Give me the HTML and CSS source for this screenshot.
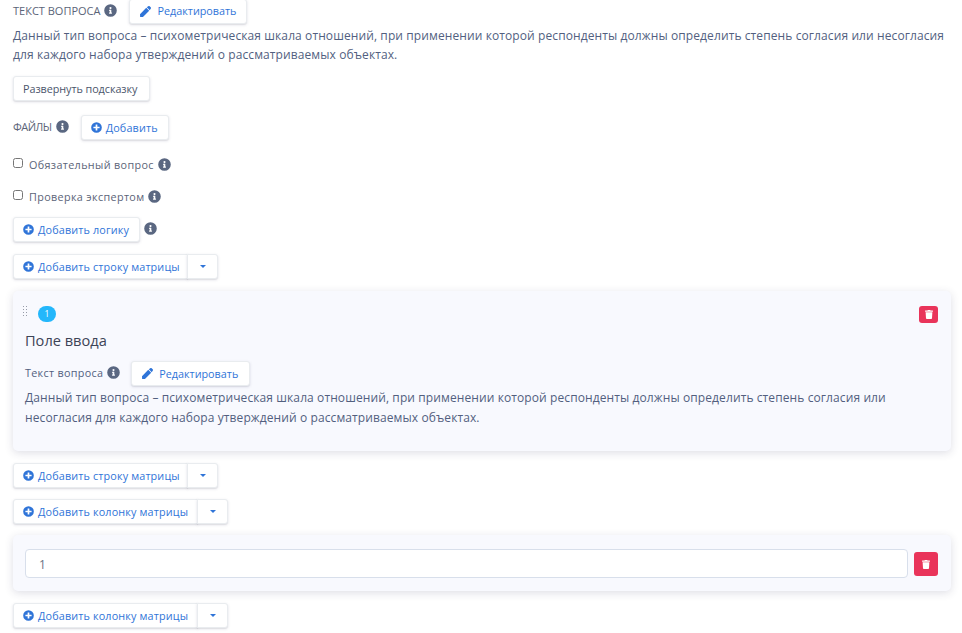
FILE: index.html
```html
<!DOCTYPE html>
<html lang="ru">
<head>
<meta charset="utf-8">
<title>Вопрос</title>
<link rel="stylesheet" href="styles.css">
</head>
<body>
<svg class="defs" width="0" height="0" aria-hidden="true">
  <symbol id="i-info" viewBox="0 0 512 512"><path d="M256 8a248 248 0 1 0 0 496 248 248 0 0 0 0-496zm0 110a42 42 0 1 1 0 84 42 42 0 0 1 0-84zm56 254c0 7-5 12-12 12h-88c-7 0-12-5-12-12v-24c0-7 5-12 12-12h12v-64h-12c-7 0-12-5-12-12v-24c0-7 5-12 12-12h64c7 0 12 5 12 12v100h12c7 0 12 5 12 12z"/></symbol>
  <symbol id="i-plus" viewBox="0 0 512 512"><path d="M256 8a248 248 0 1 0 0 496 248 248 0 0 0 0-496zm144 276c0 7-5 12-12 12h-92v92c0 7-5 12-12 12h-56c-7 0-12-5-12-12v-92h-92c-7 0-12-5-12-12v-56c0-7 5-12 12-12h92v-92c0-7 5-12 12-12h56c7 0 12 5 12 12v92h92c7 0 12 5 12 12z"/></symbol>
  <symbol id="i-pen" viewBox="0 0 512 512"><path d="M291 83 429 221 129 521 6 512l-6-123zM497 62l-47-47a48 48 0 0 0-68 0l-65 42 138 138 42-65a48 48 0 0 0 0-68z"/></symbol>
  <symbol id="i-trash" viewBox="0 0 448 512"><path d="M432 32H312l-9-19a24 24 0 0 0-22-13H167a24 24 0 0 0-21 13l-10 19H16A16 16 0 0 0 0 48v32a16 16 0 0 0 16 16h416a16 16 0 0 0 16-16V48a16 16 0 0 0-16-16zM53 467a48 48 0 0 0 48 45h246a48 48 0 0 0 48-45l21-339H32z"/></symbol>
</svg>

<main class="page">
  <div class="label-row row-top">
    <span class="caps">ТЕКСТ ВОПРОСА</span>
    <svg class="info"><use href="#i-info"/></svg>
    <button class="btn btn-link btn-edit" type="button"><svg class="ico pen"><use href="#i-pen"/></svg>Редактировать</button>
  </div>
  <p class="text">Данный тип вопроса – психометрическая шкала отношений, при применении которой респонденты должны определить степень согласия или несогласия для каждого набора утверждений о рассматриваемых объектах.</p>
  <button class="btn btn-plain hint" type="button">Развернуть подсказку</button>

  <div class="label-row row-files">
    <span class="caps">ФАЙЛЫ</span>
    <svg class="info"><use href="#i-info"/></svg>
    <button class="btn btn-link btn-add" type="button"><svg class="ico"><use href="#i-plus"/></svg>Добавить</button>
  </div>

  <label class="check check-first"><input type="checkbox"><span>Обязательный вопрос</span><svg class="info"><use href="#i-info"/></svg></label>
  <label class="check check-second"><input type="checkbox"><span>Проверка экспертом</span><svg class="info"><use href="#i-info"/></svg></label>

  <div class="logic-row">
    <button class="btn btn-link" type="button"><svg class="ico"><use href="#i-plus"/></svg>Добавить логику</button>
    <svg class="info"><use href="#i-info"/></svg>
  </div>

  <div class="split split-a">
    <button class="btn btn-link" type="button"><svg class="ico"><use href="#i-plus"/></svg>Добавить строку матрицы</button>
    <button class="btn btn-link caret-btn" type="button" aria-label="Меню"><span class="caret"></span></button>
  </div>

  <section class="card card-row">
    <div class="card-head">
      <span class="grip"></span>
      <span class="badge">1</span>
      <button class="del del-small" type="button" aria-label="Удалить"><svg class="trash"><use href="#i-trash"/></svg></button>
    </div>
    <h3 class="card-title">Поле ввода</h3>
    <div class="label-row row-inner">
      <span class="sub">Текст вопроса</span>
      <svg class="info"><use href="#i-info"/></svg>
      <button class="btn btn-link btn-edit" type="button"><svg class="ico pen"><use href="#i-pen"/></svg>Редактировать</button>
    </div>
    <p class="text text-inner">Данный тип вопроса – психометрическая шкала отношений, при применении которой респонденты должны определить степень согласия или несогласия для каждого набора утверждений о рассматриваемых объектах.</p>
  </section>

  <div class="split split-b">
    <button class="btn btn-link" type="button"><svg class="ico"><use href="#i-plus"/></svg>Добавить строку матрицы</button>
    <button class="btn btn-link caret-btn" type="button" aria-label="Меню"><span class="caret"></span></button>
  </div>
  <div class="split split-c">
    <button class="btn btn-link" type="button"><svg class="ico"><use href="#i-plus"/></svg>Добавить колонку матрицы</button>
    <button class="btn btn-link caret-btn" type="button" aria-label="Меню"><span class="caret"></span></button>
  </div>

  <section class="card card-col">
    <input class="field" type="text" value="1">
    <button class="del del-big" type="button" aria-label="Удалить"><svg class="trash"><use href="#i-trash"/></svg></button>
  </section>

  <div class="split split-d">
    <button class="btn btn-link" type="button"><svg class="ico"><use href="#i-plus"/></svg>Добавить колонку матрицы</button>
    <button class="btn btn-link caret-btn" type="button" aria-label="Меню"><span class="caret"></span></button>
  </div>
</main>
</body>
</html>
```
FILE: styles.css
```css
* { box-sizing: border-box; }
html, body { margin: 0; padding: 0; overflow: hidden; background: #fff; }
body { font-family: "Open Sans", "Noto Sans", sans-serif; font-size: 12px; color: #525f7f; height: 633px; }
.defs { position: absolute; }
.page { padding: 0 11px 0 13px; margin-top: -1px; }

.label-row { display: flex; align-items: center; }
.caps { font-size: 11px; line-height: 16px; color: #5b6478; }
.sub { font-size: 10.8px; line-height: 16px; letter-spacing: .3px; color: #525f7f; }
.info { width: 13px; height: 13px; fill: #5a6781; flex: none; }

.btn {
  display: inline-flex; align-items: center; justify-content: flex-start;
  height: 25px; padding: 0 9px; background: #fff;
  border: 1px solid #e9ecef; border-radius: 3px;
  box-shadow: 0 1px 3px rgba(50, 50, 93, .16), 0 1px 0 rgba(0, 0, 0, .04);
  font: 500 10.8px/1 "Open Sans", "Noto Sans", sans-serif; letter-spacing: .15px; white-space: nowrap;
}
.btn-link { color: #2f74d8; }
.btn-plain { color: #4b556b; }
.ico { width: 11px; height: 11px; fill: #2f74d8; margin-right: 4px; flex: none; }
.pen { margin: 0 6px 0 1px; }
.btn-edit { letter-spacing: 0; }

.row-top { height: 25px; }
.row-top .caps { margin-top: -2px; }
.row-top .info { margin: -3px 0 0 4px; }
.row-top .btn-edit { margin-left: 12px; width: 118px; }

.text { margin: 0; font-size: 12px; line-height: 19.2px; letter-spacing: .1px; color: #525f7f; }
.page > .text { margin-top: 2px; width: 938px; }

.hint { display: flex; margin-top: 12px; width: 137px; letter-spacing: -.05px; }

.row-files { margin-top: 14px; height: 25px; }
.row-files .caps { margin-top: -2px; letter-spacing: -.5px; }
.row-files .info { margin: -2px 0 0 4px; }
.row-files .btn-add { margin-left: 12px; width: 88px; }

.check { display: flex; align-items: center; height: 16px; font-size: 10.8px; letter-spacing: .35px; color: #5b6478; }
.check input { width: 10px; height: 10px; margin: -3px 6px 0 0; }
.check .info { margin-left: 4px; }
.check-first { margin-top: 16px; }
.check-second { margin-top: 16px; }

.logic-row { display: flex; align-items: flex-start; margin-top: 13px; }
.logic-row .btn { width: 127px; }
.logic-row .info { margin: 5px 0 0 4px; }

.split { display: flex; width: max-content; border-radius: 3px; }
.split .btn:first-child { border-radius: 3px 0 0 3px; }
.caret-btn { width: 31px; padding: 0; justify-content: center; margin-left: -1px; border-radius: 0 3px 3px 0; }
.caret { width: 0; height: 0; border: 3.5px solid transparent; border-top: 3.5px solid #2f74d8; border-bottom: 0; }
.split-a { margin-top: 12px; }
.split-a .btn:first-child, .split-b .btn:first-child { width: 175px; }
.split-b { margin-top: 12px; }
.split-c { margin-top: 11px; }
.split-c .btn:first-child, .split-d .btn:first-child { width: 185px; }
.split-d { margin-top: 12px; }

.card { background: #f8f9fe; border-radius: 5px; box-shadow: 0 2px 8px rgba(50, 50, 93, .16); width: 938px; }
.card-row { margin-top: 12px; height: 160px; padding: 13px 13px 0 12px; }
.card-head { display: flex; align-items: center; height: 20px; }
.grip { width: 6px; height: 13px; margin: -5px 0 0 -3px; background-image: radial-gradient(circle, #969ba8 .8px, transparent 1px); background-size: 3px 3px; }
.badge { margin-left: 10px; width: 18px; height: 16px; border-radius: 8px; background: #24b7fb; color: #fff; font-size: 8.5px; line-height: 16px; text-align: center; }
.del { display: flex; align-items: center; justify-content: center; border: 0; padding: 0; background: #e9345a; border-radius: 3px; }
.del-small { width: 19px; height: 17px; margin-left: auto; }
.del-small .trash { width: 8px; height: 9px; }
.trash { fill: #fff; }
.card-title { margin: 6px 0 0; font-size: 14.6px; line-height: 20px; font-weight: 400; color: #3d4456; }
.row-inner { margin-top: 11px; height: 25px; }
.row-inner .sub { margin: -2px 0 0; }
.row-inner .info { margin: -2px 0 0 4px; }
.row-inner .btn-edit { margin-left: 11px; width: 119px; }
.text-inner { margin: 2px 0 0; width: 880px; }

.card-col { margin-top: 11px; height: 56px; padding: 14px 13px 0 12px; display: flex; gap: 6px; align-items: flex-start; }
.field { flex: 1; min-width: 0; height: 29px; padding: 1px 13px 0; border: 1px solid #d8dfeb; border-radius: 4px; background: #fff; font: 12px "Open Sans", "Noto Sans", sans-serif; color: #6b7385; outline: none; }
.del-big { width: 24px; height: 24px; margin-top: 3px; }
.del-big .trash { width: 8px; height: 9px; }
```
